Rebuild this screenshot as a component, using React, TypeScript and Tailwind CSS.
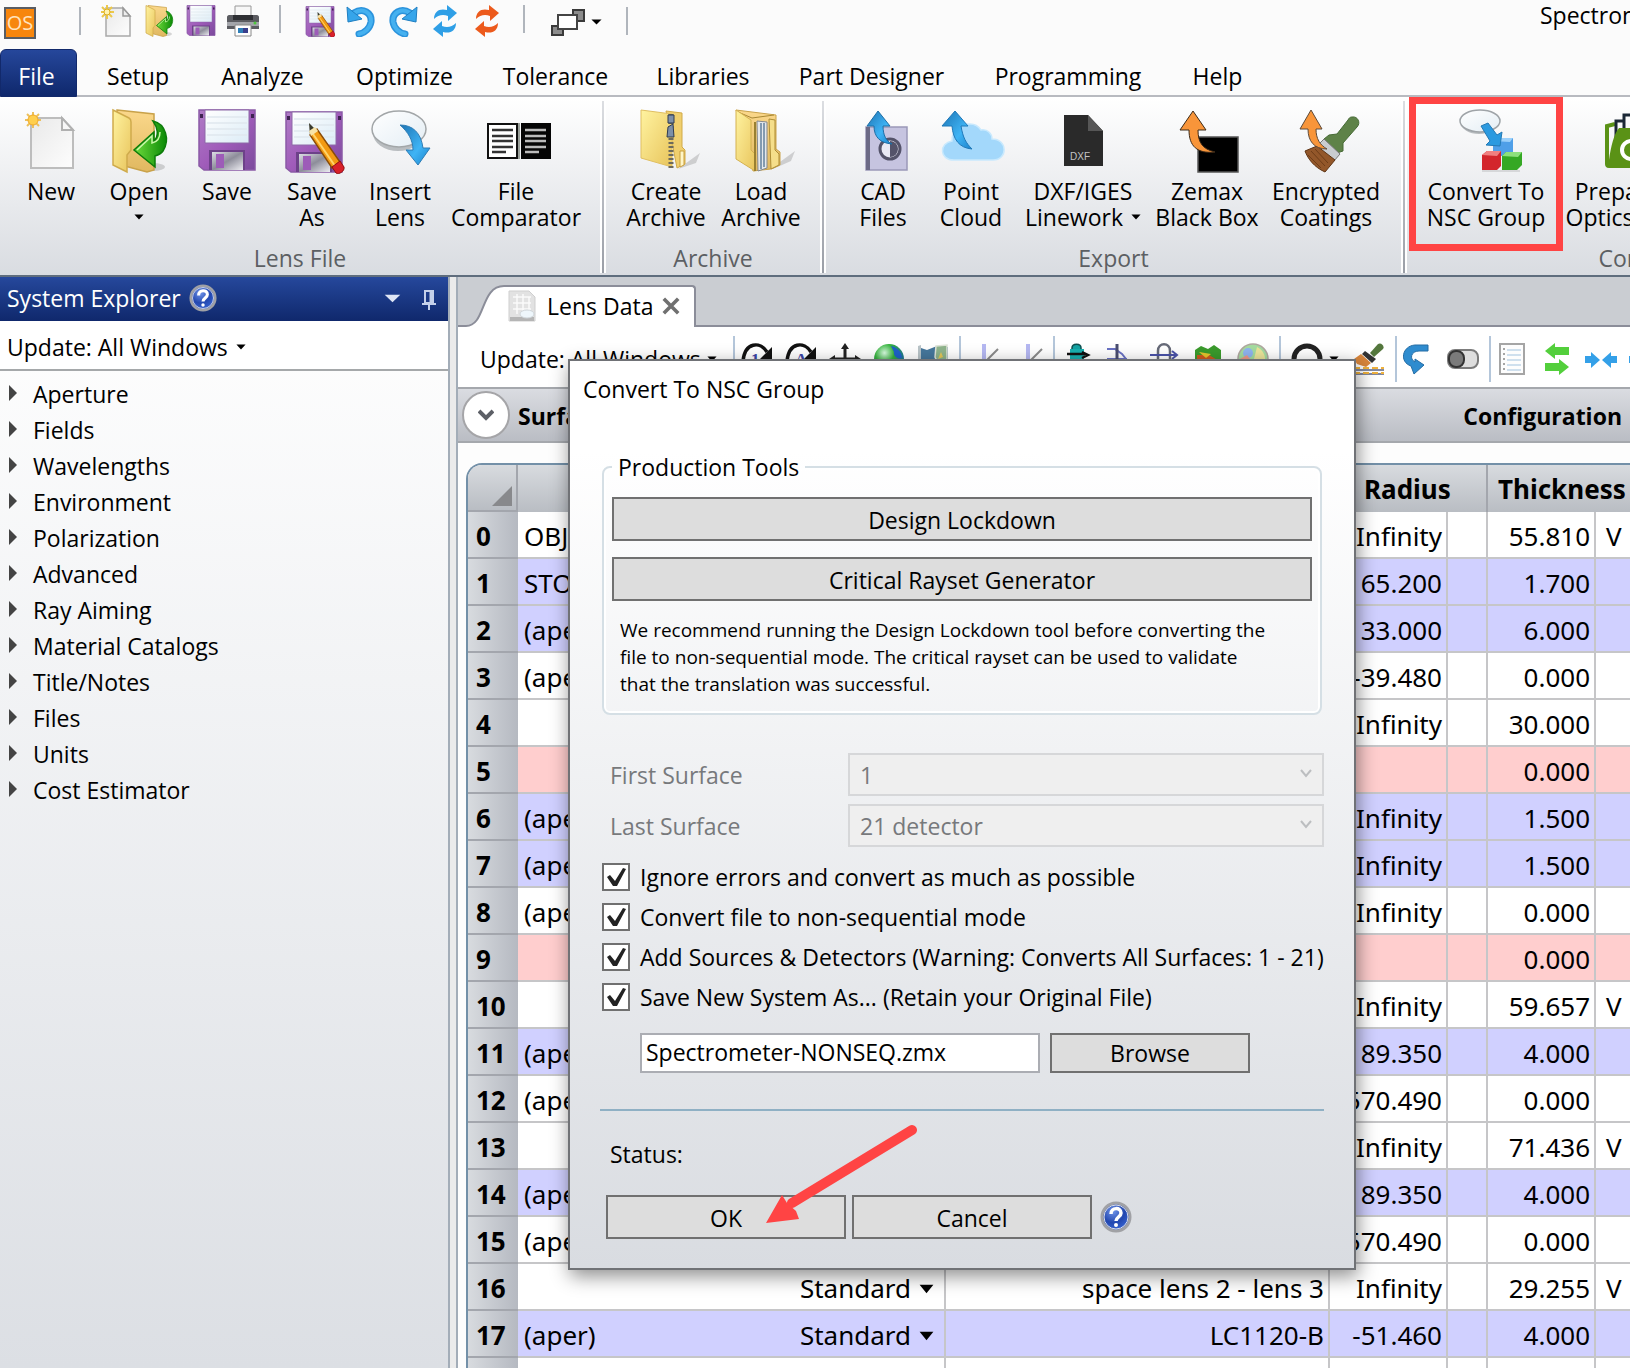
import React from "react";
import clsx from "clsx";

/* ---------- small icons ---------- */

type IconProps = { className?: string };

function Caret({ className = "w-[11px] h-1.5" }: IconProps) {
  return (
    <svg viewBox="0 0 12 7" preserveAspectRatio="none" className={clsx("shrink-0", className)} fill="currentColor">
      <path d="M0.5 0.5h11L6 6.5z" />
    </svg>
  );
}

// Gradients shared by every icon on the page
function IconDefs() {
  return (
    <svg className="absolute w-0 h-0" aria-hidden="true">
      <defs>
        <linearGradient id="page" x1="0" y1="0" x2="1" y2="1">
          <stop offset="0" stopColor="#e9e9e9" />
          <stop offset="1" stopColor="#fdfdfd" />
        </linearGradient>
        <linearGradient id="folder" x1="0" y1="0" x2="1" y2="1">
          <stop offset="0" stopColor="#fff3a0" />
          <stop offset="1" stopColor="#e8c45c" />
        </linearGradient>
        <linearGradient id="folderBack" x1="0" y1="0" x2="0" y2="1">
          <stop offset="0" stopColor="#fbd88b" />
          <stop offset="1" stopColor="#e0b860" />
        </linearGradient>
        <linearGradient id="green" x1="0" y1="0" x2="1" y2="0">
          <stop offset="0" stopColor="#6fdc3c" />
          <stop offset="1" stopColor="#0b8a06" />
        </linearGradient>
        <linearGradient id="purple" x1="0" y1="0" x2="1" y2="1">
          <stop offset="0" stopColor="#b07cc6" />
          <stop offset="0.5" stopColor="#a05cba" />
          <stop offset="1" stopColor="#7b4a9c" />
        </linearGradient>
        <linearGradient id="label" x1="0" y1="0" x2="1" y2="1">
          <stop offset="0" stopColor="#ffffff" />
          <stop offset="1" stopColor="#dcecf6" />
        </linearGradient>
        <linearGradient id="shutter" x1="0" y1="0" x2="1" y2="1">
          <stop offset="0" stopColor="#dcdce4" />
          <stop offset="0.5" stopColor="#8d8d9a" />
          <stop offset="1" stopColor="#ededf2" />
        </linearGradient>
        <linearGradient id="blue" x1="0" y1="0" x2="1" y2="1">
          <stop offset="0" stopColor="#1d74b4" />
          <stop offset="0.6" stopColor="#3fb4f5" />
          <stop offset="1" stopColor="#1b83cc" />
        </linearGradient>
        <linearGradient id="glass" x1="0" y1="0" x2="1" y2="1">
          <stop offset="0" stopColor="#ffffff" />
          <stop offset="1" stopColor="#e3edf4" />
        </linearGradient>
        <radialGradient id="help" cx="0.4" cy="0.3" r="0.8">
          <stop offset="0" stopColor="#6f93e8" />
          <stop offset="0.5" stopColor="#2348b0" />
          <stop offset="1" stopColor="#3f6fe0" />
        </radialGradient>
        <radialGradient id="globe" cx="0.35" cy="0.3" r="0.8">
          <stop offset="0" stopColor="#d8fbe0" />
          <stop offset="0.4" stopColor="#35b33c" />
          <stop offset="1" stopColor="#1258b8" />
        </radialGradient>
      </defs>
    </svg>
  );
}

function NewIcon({ className }: IconProps) {
  return (
    <svg viewBox="1 0 64 64" className={className}>
      <path d="M13 9h31l11 12v38H13z" fill="url(#page)" stroke="#bdbdbd" strokeWidth="2" />
      <path d="M44 9v12h11z" fill="#f7f7f7" stroke="#b0b0b0" strokeWidth="2" />
      <g stroke="#ecc05c" strokeWidth="2">
        <path d="M15 3v16M7 11h16M9 5l12 12M21 5L9 17" />
      </g>
      <circle cx="15" cy="11" r="5" fill="#ffcf4d" stroke="#f0a92a" />
    </svg>
  );
}

function NewSmallIcon({ className }: IconProps) {
  return (
    <svg viewBox="0 0 32 32" className={className}>
      <path d="M5 3h17l7 8v20H5z" fill="url(#page)" stroke="#a9a9a9" strokeWidth="1.5" />
      <path d="M22 3v8h7z" fill="#eee" stroke="#999" strokeWidth="1.5" />
      <path d="M6 0v14M0 7h13M1 2l10 10M11 2L1 12" stroke="#ecc84a" strokeWidth="2" />
      <circle cx="6" cy="7" r="3" fill="#fff3b0" stroke="#dcae22" />
    </svg>
  );
}

function OpenIcon({ className }: IconProps) {
  return (
    <svg viewBox="0 0 64 64" className={className}>
      <ellipse cx="46" cy="58" rx="12" ry="4" fill="#000" opacity="0.15" />
      <path d="M10 1l37 4v56l-7 2-30-8z" fill="url(#folderBack)" stroke="#c9a24a" strokeWidth="1.5" />
      <path d="M6 1l16 8c2 1 2 2 2 4v28l-4 5v17L6 56z" fill="url(#folder)" stroke="#cfab4c" strokeWidth="1.5" />
      <path
        d="M46 12c13 3 17 19 10 30-2 3-5 4-8 5v11L27 41l20-18v9c5-5 4-13-1-20z"
        fill="url(#green)"
        stroke="#0d7c0a"
        strokeWidth="1.5"
      />
      <path d="M30 41l15-14v7c5-1 8-5 8-11" fill="none" stroke="#c8f7a8" strokeWidth="1.5" />
    </svg>
  );
}

function FloppyBody() {
  return (
    <>
      <path d="M4 1h56v60H9l-5-4z" fill="url(#purple)" stroke="#8a5aa6" strokeWidth="1.5" />
      <path d="M10 1h44v33H10z" fill="url(#label)" stroke="#8e6aa8" strokeWidth="1" />
      <path d="M12 8h40M12 14h40M12 20h40M12 26h40" stroke="#dfe8ee" strokeWidth="1.5" />
      <path d="M5 5h3v4H5zM56 5h3v4h-3z" fill="#3f2352" />
      <path d="M14 41h36v20H14z" fill="#6d4189" />
      <path d="M17 43h31v18H17z" fill="url(#shutter)" />
      <path d="M21 45h8v14h-8z" fill="#9d5cb8" />
    </>
  );
}

function SaveIcon({ className }: IconProps) {
  return (
    <svg viewBox="0 0 64 64" className={className}>
      <FloppyBody />
    </svg>
  );
}

function SaveAsIcon({ className }: IconProps) {
  return (
    <svg viewBox="-2 -2 64 64" className={className}>
      <FloppyBody />
      <path d="M27 12l1 13 7-5z" fill="#3a3a2c" />
      <path d="M28 24l7-6 23 33-8 6z" fill="#f39a12" stroke="#8a4c08" strokeWidth="1.5" />
      <path d="M31 23l22 32" stroke="#ffd46a" strokeWidth="2" />
      <path d="M27 20l6-4 3 4-7 5z" fill="#f7e3a8" />
      <path d="M50 56l8-6 4 6c1 4-5 8-8 6z" fill="#d9202a" stroke="#8f1010" />
    </svg>
  );
}

function InsertLensIcon({ className }: IconProps) {
  return (
    <svg viewBox="-3 0 64 64" className={className}>
      <ellipse cx="27" cy="24" rx="25" ry="18" fill="#b9bdc0" />
      <ellipse cx="28" cy="20" rx="27" ry="18" fill="url(#glass)" stroke="#a2a6a8" strokeWidth="1.5" />
      <path d="M29 16c13 0 21 8 23 23h7L47 56 35 41h7c0-10-5-18-13-25z" fill="url(#blue)" stroke="#2f7db5" strokeWidth="1" />
    </svg>
  );
}

function ComparatorIcon({ className }: IconProps) {
  return (
    <svg viewBox="-3 0 64 64" className={className}>
      <path d="M1 15h29v34H1z" fill="#fff" stroke="#111" strokeWidth="2" />
      <path d="M34 14h30v36H34z" fill="#050505" />
      <path d="M31 14h2v36h-2z" fill="#9aa09a" />
      <path d="M5 21h21M5 27h21M5 32h21M5 38h21M5 43h14" stroke="#333" strokeWidth="2.5" />
      <path d="M38 21h21M38 27h21M38 32h21M38 38h21M38 43h14" stroke="#bbb" strokeWidth="2.5" />
    </svg>
  );
}

function CreateArchiveIcon({ className }: IconProps) {
  return (
    <svg viewBox="-2 0 64 64" className={className}>
      <path d="M42 60l22-16-4 10-18 6z" fill="#000" opacity="0.15" />
      <path d="M30 2l16 2v34l3 3v14l-8 4z" fill="#f0cf6e" stroke="#d1aa48" strokeWidth="1" />
      <path d="M5 1l31 4v53L5 49z" fill="url(#folder)" stroke="#e0bf62" strokeWidth="1" />
      <path d="M35 5v54" stroke="#6d6a5c" strokeWidth="5" strokeDasharray="2 2" />
      <path d="M32 6h6v8h-6zM32 18l5-3 1 13h-7z" fill="#7d8fa8" stroke="#2f3b50" strokeWidth="1" />
      <path d="M44 42h4v14l-4 2z" fill="#fff6c8" stroke="#c99f3e" strokeWidth="1" />
    </svg>
  );
}

function LoadArchiveIcon({ className }: IconProps) {
  return (
    <svg viewBox="-2 0 64 64" className={className}>
      <path d="M42 58l22-16-4 10-18 8z" fill="#000" opacity="0.15" />
      <path d="M5 1l40 5v34l4 3v13l-9 4-18 2z" fill="url(#folderBack)" stroke="#c9a24a" strokeWidth="1" />
      <path d="M7 3l14 6 22-3" fill="none" stroke="#a88834" strokeWidth="1" />
      <path d="M26 12l10 1v46l-9 3z" fill="#e4e8ec" stroke="#85888c" strokeWidth="1" />
      <path d="M30 14v46M33 14v44" stroke="#63809c" strokeWidth="1.5" />
      <path d="M5 1l15 10v30l4 4v17L5 50z" fill="url(#folder)" stroke="#d4b150" strokeWidth="1" />
      <path d="M24 13v49" stroke="#9a8030" strokeWidth="2" />
      <path d="M38 10l6 1v30l4 4v11l-8 4z" fill="#f5de8a" stroke="#ae8d35" strokeWidth="1" />
    </svg>
  );
}

function CadIcon({ className }: IconProps) {
  return (
    <svg viewBox="-2 0 64 64" className={className}>
      <path d="M13 18h41v43H13z" fill="#c6c4e0" stroke="#9a98b8" strokeWidth="1.5" />
      <path d="M13 18h4v43h-4z" fill="#6c6a86" />
      <circle cx="37" cy="40" r="10" fill="#e9e9f4" stroke="#54536a" strokeWidth="3" />
      <path d="M37 32a8 8 0 010 16z" fill="#54536a" />
      <path d="M25 2l12 15h-7c0 9 3 15 9 18-12-1-18-7-18-18h-7z" fill="url(#blue)" stroke="#1e6ea6" strokeWidth="1" />
    </svg>
  );
}

function CloudIcon({ className }: IconProps) {
  return (
    <svg viewBox="-2 0 64 64" className={className}>
      <path
        d="M13 51C-2 51-2 34 11 32c0-12 8-17 18-17 6 0 9 3 11 6 7-1 11 4 11 9 16 0 16 21 1 21z"
        fill="#a3d8fb"
        stroke="#c9e9fd"
        strokeWidth="1.5"
      />
      <path d="M14 2l13 15h-7c2 12 5 17 11 23-13-1-19-10-20-23H1z" fill="url(#blue)" stroke="#1f78b8" strokeWidth="1" />
    </svg>
  );
}

function DxfIcon({ className }: IconProps) {
  return (
    <svg viewBox="0 0 64 64" className={className}>
      <path d="M13 6h24l15 16v35H13z" fill="#2a2a2a" />
      <path d="M37 6v16h15z" fill="#565656" />
      <text x="19" y="51" fontSize="10" fill="#c4c4c4" fontFamily="Liberation Sans, sans-serif">
        DXF
      </text>
    </svg>
  );
}

function BlackBoxIcon({ className }: IconProps) {
  return (
    <svg viewBox="-3 0 64 64" className={className}>
      <path d="M20 28h40v35H20z" fill="#000" stroke="#555" strokeWidth="1.5" />
      <path d="M15 2l13 19h-8c0 12 4 19 17 22-18 2-26-6-26-22H2z" fill="#f8953a" stroke="#3d2a18" strokeWidth="1" />
    </svg>
  );
}

function CoatingsIcon({ className }: IconProps) {
  return (
    <svg viewBox="-5 0 64 64" className={className}>
      <path d="M53 8c6-1 9 6 5 10L44 34v8l-6 2-13-14 5-4 8-1 11-14c1-2 2-3 4-3z" fill="#5e8248" stroke="#466a35" strokeWidth="1" />
      <path d="M25 30l16 15-6 7-18-14z" fill="#c9ccd0" stroke="#777" strokeWidth="1" />
      <path d="M18 37l18 14-10 12C15 58 9 50 6 42z" fill="#93572a" stroke="#5e3414" strokeWidth="1" />
      <path d="M12 42l14 15M16 40l13 14M9 46l13 13" stroke="#6e3d18" strokeWidth="1" />
      <path d="M12 1l11 19h-6c0 10 4 16 11 20-13 0-19-8-19-20H1z" fill="#f8953a" stroke="#5d4a3a" strokeWidth="1" />
    </svg>
  );
}

function ConvertNscIcon({ className }: IconProps) {
  return (
    <svg viewBox="-5 0 64 64" className={className}>
      <ellipse cx="20" cy="14" rx="18" ry="11" fill="#b9bdc0" />
      <ellipse cx="21" cy="12" rx="20" ry="11" fill="url(#glass)" stroke="#9fa4a8" strokeWidth="1.5" />
      <path d="M34 32l4-3h16v14l-4 4H34z" fill="#4f9fe8" />
      <path d="M34 32l4-3h16l-3 4z" fill="#9bd0fa" />
      <path d="M23 46l5-4h14v15l-4 4H23z" fill="#d3262c" />
      <path d="M23 46l5-4h14l-4 5z" fill="#f08080" />
      <path d="M43 47l4-4h16v13l-5 5H43z" fill="#35a824" />
      <path d="M43 47l4-4h16l-4 5z" fill="#8ee07c" />
      <path d="M23 61h38v2H23z" fill="#000" opacity="0.1" />
      <path d="M22 17l7-3 9 12 5-3-2 14-14-1 4-4z" fill="#2b9ae0" stroke="#2479b4" strokeWidth="1" />
    </svg>
  );
}

function PrepareIcon({ className }: IconProps) {
  return (
    <svg viewBox="4 1 64 64" className={className}>
      <path d="M5 56V18l8-2" fill="none" stroke="#5a9216" strokeWidth="4" />
      <path d="M14 34V13h9M22 26V7h20" fill="none" stroke="#1a2735" strokeWidth="3" />
      <path d="M7 52c2-14 5-26 10-32h53v40H7c-3 0-4-2-4-4z" fill="#5a9216" />
      <circle cx="29" cy="42" r="9" fill="none" stroke="#fff" strokeWidth="4" />
    </svg>
  );
}

function PrintIcon({ className }: IconProps) {
  return (
    <svg viewBox="0 0 32 32" className={className}>
      <path d="M8 1h16v12H8z" fill="#f7f7f7" stroke="#999" />
      <path d="M0 12c0-1 1-2 2-2h28c1 0 2 1 2 2v12H0z" fill="#5b5c61" />
      <path d="M6 10h20v5H6z" fill="#2e2f33" />
      <path d="M0 17h32v4H0z" fill="#a3a5aa" />
      <path d="M8 20h16v11H8z" fill="#fff" stroke="#888" />
      <path d="M11 23h5v5h-5z" fill="#2f7fb8" />
      <path d="M16 23h5v5h-5z" fill="#3a3f8c" />
      <circle cx="28" cy="18" r="1.5" fill="#4cc83a" />
    </svg>
  );
}

function UndoIcon({ className }: IconProps) {
  return (
    <svg viewBox="0 0 32 32" className={className}>
      <path d="M9 8c9-6 18 0 17 9-1 6-6 11-12 12" fill="none" stroke="#2b93dc" strokeWidth="7" strokeLinecap="round" />
      <path d="M9 8c9-6 18 0 17 9-1 6-6 11-12 12" fill="none" stroke="#45b1f0" strokeWidth="4" strokeLinecap="round" />
      <path d="M2 2l1 15 14-3z" fill="#36a5ea" stroke="#1f7fc2" strokeWidth="1" />
    </svg>
  );
}

function RefreshIcon({ className }: IconProps) {
  return (
    <svg viewBox="0 0 28 32" className={className} fill="currentColor">
      <path d="M3 14C3 6 9 3 16 5V0l10 8-9 8v-5c-5-2-10-1-14 3z" />
      <path d="M25 18c0 8-6 11-13 9v5L2 24l9-8v5c5 2 10 1 14-3z" />
    </svg>
  );
}

function WindowsIcon({ className }: IconProps) {
  return (
    <svg viewBox="0 0 34 28" className={className}>
      <path d="M22 2h11v11H22z" fill="#8c8c8c" stroke="#3a3a3a" strokeWidth="2" />
      <path d="M1 18h11v9H1z" fill="#8c8c8c" stroke="#3a3a3a" strokeWidth="2" />
      <path d="M7 7h19v14H7z" fill="#fff" stroke="#444" strokeWidth="2" />
    </svg>
  );
}

function HelpIcon({ className }: IconProps) {
  return (
    <svg viewBox="0 0 32 32" className={className}>
      <circle cx="16" cy="16" r="14" fill="url(#help)" stroke="#a0a1a5" strokeWidth="3" />
      <circle cx="16" cy="16" r="12" fill="none" stroke="#d9dce6" strokeWidth="1" />
      <path d="M11 13c0-7 10-7 10-1 0 4-5 4-5 8" fill="none" stroke="#fff" strokeWidth="3.5" />
      <circle cx="16" cy="24" r="2" fill="#fff" />
    </svg>
  );
}

/* ---------- editor toolbar icons ---------- */

function OrbitIcon({ mark }: { mark: string }) {
  return (
    <svg viewBox="0 0 32 32" className="w-8 h-8">
      <path d="M2 18C4-1 19-2 26 9" fill="none" stroke="#111" strokeWidth="3.5" />
      <path d="M31 4v12H19z" fill="#111" />
      <text x="10" y="22" fontSize="17" fontWeight="700" fill="#3c46a8" fontFamily="Liberation Serif, serif">
        {mark}
      </text>
    </svg>
  );
}

function MoveIcon() {
  return (
    <svg viewBox="0 0 32 32" className="w-8 h-8">
      <path d="M16 3v26M3 16h26" stroke="#222" strokeWidth="3" />
      <path d="M16 0l4 6h-8zM16 32l4-6h-8zM0 16l6-4v8zM32 16l-6-4v8z" fill="#222" />
    </svg>
  );
}

function GlobeIcon() {
  return (
    <svg viewBox="0 0 32 32" className="w-8 h-8">
      <circle cx="16" cy="16" r="15" fill="url(#globe)" />
      <path d="M18 3c6 1 11 6 11 12-5 2-9-3-8-6z" fill="#1e62c8" />
    </svg>
  );
}

function MapIcon() {
  return (
    <svg viewBox="0 0 32 32" className="w-8 h-8">
      <path d="M1 4l9 3 10-4 11 1v26H1z" fill="#46779c" />
      <path d="M1 3l3-1v28H1z" fill="#b9c4c8" />
      <path d="M19 3l11-1v14l-8 6-4-8z" fill="#8fb48c" stroke="#dfe4d8" strokeWidth="1.5" />
      <path d="M24 9l-3 7 5-2z" fill="#e4c858" />
    </svg>
  );
}

function AxisIcon() {
  return (
    <svg viewBox="0 0 32 32" className="w-8 h-8">
      <path d="M17 1v30M1 18h16" stroke="#b5b8f2" strokeWidth="4" />
      <path d="M20 17L31 6" stroke="#8a8a8a" strokeWidth="2" />
    </svg>
  );
}

function ElementIcon() {
  return (
    <svg viewBox="0 0 32 32" className="w-8 h-8">
      <path d="M11 5c0-5 9-5 9 0v22h-9z" fill="#13a3a3" stroke="#0d5050" strokeWidth="1.5" />
      <path d="M9 6h14v11H9z" fill="#19b0b0" />
      <path d="M6 11h18M21 9l6 3-6 3" stroke="#111" strokeWidth="2.5" fill="none" />
    </svg>
  );
}

function TiltIcon() {
  return (
    <svg viewBox="0 0 32 32" className="w-8 h-8" fill="none">
      <path d="M2 6h8l7 5 8 10M2 16h20" stroke="#6a72c4" strokeWidth="2" />
      <path d="M12 1v24" stroke="#4a4d70" strokeWidth="3" />
    </svg>
  );
}

function ApertureIcon() {
  return (
    <svg viewBox="0 0 32 32" className="w-8 h-8" fill="none">
      <path d="M9 31V8c0-9 12-9 12 0v23" stroke="#666a78" strokeWidth="2.5" />
      <path d="M1 12h26M23 8l5 4-5 4" stroke="#4a52a8" strokeWidth="2" />
    </svg>
  );
}

function SurfaceIcon() {
  return (
    <svg viewBox="0 0 32 32" className="w-8 h-8">
      <path d="M2 7l6-4 7 3 6-4 7 5v18H2z" fill="#3a9b2c" />
      <path d="M4 12h12l10 6v7H4z" fill="#d05a1e" />
      <path d="M6 9l12 2-5 4z" fill="#e8c52c" />
    </svg>
  );
}

function FalseColorIcon() {
  return (
    <svg viewBox="0 0 32 32" className="w-8 h-8">
      <circle cx="16" cy="16" r="15" fill="#a5dca0" stroke="#b0a8a0" strokeWidth="1.5" />
      <circle cx="11" cy="10" r="5" fill="#8fb4f0" />
      <path d="M20 4c6 3 8 8 8 12H17z" fill="#ece59a" />
      <path d="M3 16h10l-3-4z" fill="#ee9a8a" />
    </svg>
  );
}

function RingIcon() {
  return (
    <svg viewBox="0 0 32 32" className="w-8 h-8">
      <circle cx="16" cy="16" r="13" fill="none" stroke="#222" strokeWidth="5" />
    </svg>
  );
}

function BrushIcon() {
  return (
    <svg viewBox="0 0 32 32" className="w-8 h-8">
      <path d="M25 1c3-2 7 2 5 5l-9 8-4-4z" fill="#54773d" />
      <path d="M12 8l11 8-4 4-10-9z" fill="#333" />
      <path d="M8 11l10 9-5 4-9-3-3-5z" fill="#d9863c" />
      <path d="M1 27h30M1 31h30" stroke="#5a6280" strokeWidth="1.5" />
      <path d="M1 25h30M1 30h30" stroke="#efb13c" strokeWidth="2" strokeDasharray="6 3" />
    </svg>
  );
}

function ReverseIcon() {
  return (
    <svg viewBox="2 0 32 32" className="w-8 h-8">
      <path d="M27 2v6h-9c-8 0-10 8-4 11v-3l9 6-10 9-3-8C-2 19 1 3 14 2z" fill="#2f8ccf" stroke="#246ca4" strokeWidth="1" />
    </svg>
  );
}

function ToggleIcon() {
  return (
    <svg viewBox="0 0 32 32" className="w-8 h-8">
      <rect x="1" y="7" width="30" height="18" rx="7" fill="#dedede" stroke="#7c7c7c" strokeWidth="2" />
      <rect x="2" y="8" width="15" height="16" rx="7" fill="#7a7a7a" stroke="#333" strokeWidth="2" />
    </svg>
  );
}

function ListIcon() {
  return (
    <svg viewBox="0 0 32 32" className="w-8 h-8">
      <path d="M3 1h24v30H3z" fill="#fdfdfd" stroke="#a5a5a5" strokeWidth="2" />
      <path d="M10 7h14M10 12h14M10 17h14M10 22h14M10 27h14" stroke="#cfe0ee" strokeWidth="2" />
      <path d="M7 5v24" stroke="#888" strokeWidth="1.5" strokeDasharray="2 3" />
    </svg>
  );
}

function SwapIcon() {
  return (
    <svg viewBox="0 0 32 32" className="w-8 h-8" fill="#53cf3c">
      <path d="M4 8l10-8v4h14v8H14v4z" />
      <path d="M28 24l-10-8v4H4v8h14v4z" />
    </svg>
  );
}

function CollapseIcon() {
  return (
    <svg viewBox="0 0 32 32" className="w-8 h-8" fill="#34a0e8">
      <path d="M0 13h6V9l9 8-9 8v-5H0zM32 13h-6V9l-9 8 9 8v-5h6z" />
    </svg>
  );
}

function Divider({ className }: IconProps) {
  return <span className={clsx("w-0.5 h-[46px] bg-[#b4c6da] shrink-0", className)} />;
}

/* ---------- data ---------- */

const menuTabs = [
  { label: "Setup", width: "w-[114px]" },
  { label: "Analyze", width: "w-[135px]" },
  { label: "Optimize", width: "w-[149px]" },
  { label: "Tolerance", width: "w-[153px]" },
  { label: "Libraries", width: "w-[142px]" },
  { label: "Part Designer", width: "w-[195px]" },
  { label: "Programming", width: "w-[198px]" },
  { label: "Help", width: "w-[101px]" },
];

interface RibbonItem {
  lines: string[];
  icon: React.ReactNode;
  width: string;
  caret?: boolean;
  highlight?: boolean;
}

interface RibbonGroup {
  title: string;
  width: string;
  inset: string;
  items: RibbonItem[];
}

const ribbonIcon = "w-16 h-16 overflow-visible";

const ribbonGroups: RibbonGroup[] = [
  {
    title: "Lens File",
    width: "w-[600px]",
    inset: "pl-[7px]",
    items: [
      { lines: ["New"], icon: <NewIcon className={ribbonIcon} />, width: "w-[88px]" },
      { lines: ["Open", ""], icon: <OpenIcon className={ribbonIcon} />, width: "w-[88px]", caret: true },
      { lines: ["Save"], icon: <SaveIcon className={ribbonIcon} />, width: "w-[88px]" },
      { lines: ["Save", "As"], icon: <SaveAsIcon className={ribbonIcon} />, width: "w-[82px]" },
      { lines: ["Insert", "Lens"], icon: <InsertLensIcon className={ribbonIcon} />, width: "w-[94px]" },
      { lines: ["File", "Comparator"], icon: <ComparatorIcon className={ribbonIcon} />, width: "w-[138px]" },
    ],
  },
  {
    title: "Archive",
    width: "w-[214px]",
    inset: "pl-3",
    items: [
      { lines: ["Create", "Archive"], icon: <CreateArchiveIcon className={ribbonIcon} />, width: "w-24" },
      { lines: ["Load", "Archive"], icon: <LoadArchiveIcon className={ribbonIcon} />, width: "w-[94px]" },
    ],
  },
  {
    title: "Export",
    width: "w-[575px]",
    inset: "pl-[13px]",
    items: [
      { lines: ["CAD", "Files"], icon: <CadIcon className={ribbonIcon} />, width: "w-[88px]" },
      { lines: ["Point", "Cloud"], icon: <CloudIcon className={ribbonIcon} />, width: "w-[88px]" },
      { lines: ["DXF/IGES", "Linework"], icon: <DxfIcon className={ribbonIcon} />, width: "w-[136px]", caret: true },
      { lines: ["Zemax", "Black Box"], icon: <BlackBoxIcon className={ribbonIcon} />, width: "w-[112px]" },
      { lines: ["Encrypted", "Coatings"], icon: <CoatingsIcon className={ribbonIcon} />, width: "w-[126px]" },
    ],
  },
  {
    title: "Conversion",
    width: "w-[504px]",
    inset: "pl-0.5",
    items: [
      { lines: ["Convert To", "NSC Group"], icon: <ConvertNscIcon className={ribbonIcon} />, width: "w-[154px]", highlight: true },
      { lines: ["Prepare For", "OpticsBuilder"], icon: <PrepareIcon className={ribbonIcon} />, width: "w-[150px]" },
    ],
  },
];

const explorerItems = [
  "Aperture",
  "Fields",
  "Wavelengths",
  "Environment",
  "Polarization",
  "Advanced",
  "Ray Aiming",
  "Material Catalogs",
  "Title/Notes",
  "Files",
  "Units",
  "Cost Estimator",
];

interface LensRow {
  surf?: string;
  type?: string;
  comment?: string;
  radius?: string;
  thickness?: string;
  solve?: string;
  tone?: "blue" | "red";
}

const lensRows: LensRow[] = [
  { surf: "OBJECT", radius: "Infinity", thickness: "55.810", solve: "V" },
  { surf: "STOP", radius: "165.200", thickness: "1.700", tone: "blue" },
  { surf: "(aper)", radius: "33.000", thickness: "6.000", tone: "blue" },
  { surf: "(aper)", radius: "-39.480", thickness: "0.000" },
  { radius: "Infinity", thickness: "30.000" },
  { thickness: "0.000", tone: "red" },
  { surf: "(aper)", radius: "Infinity", thickness: "1.500", tone: "blue" },
  { surf: "(aper)", radius: "Infinity", thickness: "1.500", tone: "blue" },
  { surf: "(aper)", radius: "Infinity", thickness: "0.000" },
  { thickness: "0.000", tone: "red" },
  { radius: "Infinity", thickness: "59.657", solve: "V" },
  { surf: "(aper)", radius: "89.350", thickness: "4.000", tone: "blue" },
  { surf: "(aper)", radius: "570.490", thickness: "0.000" },
  { radius: "Infinity", thickness: "71.436", solve: "V" },
  { surf: "(aper)", radius: "89.350", thickness: "4.000", tone: "blue" },
  { surf: "(aper)", radius: "570.490", thickness: "0.000" },
  { type: "Standard", comment: "space lens 2 - lens 3", radius: "Infinity", thickness: "29.255", solve: "V" },
  { surf: "(aper)", type: "Standard", comment: "LC1120-B", radius: "-51.460", thickness: "4.000", tone: "blue" },
];

const options = [
  "Ignore errors and convert as much as possible",
  "Convert file to non-sequential mode",
  "Add Sources & Detectors (Warning: Converts All Surfaces: 1 - 21)",
  "Save New System As... (Retain your Original File)",
];

/* ---------- window chrome ---------- */

function QuickAccess() {
  const btn = "w-8 h-8 shrink-0";
  const sep = "w-0.5 h-7 bg-[#b0b5bc] shrink-0";
  return (
    <div className="h-[49px] flex items-start pt-[5px] pl-1 overflow-hidden">
      <div className="w-8 h-8 mt-0.5 border-2 border-[#595d63] bg-[#f7860d] text-[#ffe3bd] text-[20px] leading-7 text-center shrink-0">
        OS
      </div>
      <span className={clsx(sep, "ml-[43px] mt-0.5")} />
      <button aria-label="New" className={clsx(btn, "ml-5")}><NewSmallIcon className="w-8 h-8" /></button>
      <button aria-label="Open" className={clsx(btn, "ml-2.5")}><OpenIcon className="w-8 h-8" /></button>
      <button aria-label="Save" className={clsx(btn, "ml-2.5")}><SaveIcon className="w-8 h-8" /></button>
      <button aria-label="Print" className={clsx(btn, "ml-2.5")}><PrintIcon className="w-8 h-8" /></button>
      <span className={clsx(sep, "ml-5")} />
      <button aria-label="Save As" className={clsx(btn, "ml-[22px]")}><SaveAsIcon className="w-8 h-8" /></button>
      <button aria-label="Undo" className={clsx(btn, "ml-2.5")}><UndoIcon className="w-8 h-8" /></button>
      <button aria-label="Redo" className={clsx(btn, "ml-2.5")}><UndoIcon className="w-8 h-8 -scale-x-100" /></button>
      <button aria-label="Update" className={clsx(btn, "ml-2.5 text-[#2f9fe6]")}><RefreshIcon className="w-7 h-8 mx-auto" /></button>
      <button aria-label="Update All" className={clsx(btn, "ml-2.5 text-[#ec5a1c]")}><RefreshIcon className="w-7 h-8 mx-auto" /></button>
      <span className={clsx(sep, "ml-5")} />
      <button aria-label="Windows" className="ml-[26px] mt-[3px] flex items-center gap-1.5 shrink-0">
        <WindowsIcon className="w-[34px] h-7" />
        <Caret />
      </button>
      <span className={clsx(sep, "ml-6 mt-0.5")} />
      <p className="ml-auto w-[90px] -mt-1.5 leading-8 whitespace-nowrap shrink-0">Spectrometer</p>
    </div>
  );
}

function MenuTabs() {
  return (
    <nav className="h-12 flex items-stretch border-b-2 border-[#b8bac0]">
      <button className="w-[77px] -mb-0.5 pt-1.5 pr-1 rounded-t-md text-white bg-linear-to-b from-[#26479b] to-[#0f286c] border border-[#12296b]">
        File
      </button>
      <div className="flex pl-1">
        {menuTabs.map((tab) => (
          <button key={tab.label} className={clsx("pt-2", tab.width)}>
            {tab.label}
          </button>
        ))}
      </div>
    </nav>
  );
}

function RibbonButton({ item }: { item: RibbonItem }) {
  return (
    <button className={clsx("relative h-[154px] pt-3 flex flex-col items-center justify-start shrink-0", item.width)}>
      {item.icon}
      <span className="mt-[5px] block">
        {item.lines.map((line, i) => {
          const withCaret = item.caret && i === item.lines.length - 1;
          return (
            <span key={i} className="flex items-center justify-center gap-2 h-[26px] leading-[26px] whitespace-nowrap">
              {line}
              {withCaret && <Caret className="w-2.5 h-1.5" />}
            </span>
          );
        })}
      </span>
      {item.highlight && <span className="absolute inset-0 border-[7px] border-[#ff4444]" />}
    </button>
  );
}

function Ribbon() {
  return (
    <div className="h-[180px] flex bg-linear-to-b from-white to-[#d9dce1] border-b-2 border-[#5f6d7d] overflow-hidden">
      {ribbonGroups.map((group, i) => (
        <React.Fragment key={group.title}>
          {i > 0 && (
            <span className="w-1.5 mt-1 mb-0.5 border-x-2 border-white bg-linear-to-b from-[#dcdee2] to-[#9a9ea6] bg-clip-padding shrink-0" />
          )}
          <section className={clsx("shrink-0", group.width)}>
            <div className={clsx("flex", group.inset)}>
              {group.items.map((item) => (
                <RibbonButton key={item.lines.join(" ")} item={item} />
              ))}
            </div>
            <h2 className="-mt-[7px] leading-7 text-center text-[#5c5f63]">{group.title}</h2>
          </section>
        </React.Fragment>
      ))}
    </div>
  );
}

function SystemExplorer() {
  return (
    <aside className="w-[450px] shrink-0 flex flex-col border-r-2 border-[#a3adb8] bg-linear-to-b from-white to-[#dcdfe4]">
      <div className="h-11 pl-[7px] pr-3 pb-0.5 flex items-center text-white bg-linear-to-b from-[#26489c] to-[#0f286c]">
        <h1>System Explorer</h1>
        <HelpIcon className="w-7 h-7 ml-2" />
        <Caret className="ml-auto w-[17px] h-[9px] text-[#dfe6f5]" />
        <svg viewBox="0 0 14 20" className="w-3.5 h-5 ml-[21px] mt-1" fill="none" stroke="#c4d0ea" strokeWidth="2">
          <path d="M3 1h8v12H3zM0 14h14M7 14v6" />
          <path d="M9 2v11" strokeWidth="3" />
        </svg>
      </div>
      <button className="h-[50px] pl-[7px] pt-1 flex items-center gap-2 bg-white border-b-2 border-[#a5a8aa]">
        Update: All Windows <Caret className="w-2.5 h-1.5" />
      </button>
      <ul className="pt-[5px]">
        {explorerItems.map((item) => (
          <li key={item}>
            <button className="h-9 w-full pl-[9px] flex items-center gap-4">
              <svg viewBox="0 0 8 16" className="w-2 h-4 -mt-0.5 shrink-0" fill="#444">
                <path d="M0 0l8 8-8 8z" />
              </svg>
              {item}
            </button>
          </li>
        ))}
      </ul>
    </aside>
  );
}

/* ---------- lens data editor ---------- */

function EditorTabs() {
  return (
    <div className="h-[50px] shrink-0 flex items-end bg-[#cacdd2]">
      <svg viewBox="0 0 46 42" className="w-[46px] h-[42px] shrink-0">
        <path d="M0 42V41H8C28 41 22 1 46 1v41z" fill="#fff" />
        <path d="M0 41H8C28 41 22 1 46 1" fill="none" stroke="#8b8d99" strokeWidth="2" />
      </svg>
      <div className="h-[42px] w-[192px] pl-1 pb-0.5 flex items-center bg-white border-t-2 border-r-2 border-[#8b8d99] rounded-tr-sm">
        <svg viewBox="0 0 28 32" className="w-7 h-8 shrink-0">
          <path d="M1 1h20l6 6v24H1z" fill="#e2e2e2" stroke="#cfcfcf" strokeWidth="1" />
          <path d="M5 7h18M5 13h18M5 19h18M9 4v20M15 4v20M21 7v17" stroke="#fafafa" strokeWidth="1.5" />
          <path d="M2 27h24v4H2z" fill="#b5b5b5" />
          <ellipse cx="19" cy="24" rx="7" ry="4" fill="#eef6fb" stroke="#d0d6da" />
        </svg>
        <span className="ml-[11px] whitespace-nowrap">Lens Data</span>
        <button aria-label="Close" className="ml-auto mr-3.5 shrink-0">
          <svg viewBox="0 0 20 20" className="w-[18px] h-[18px]" stroke="#707070" strokeWidth="4">
            <path d="M2 2l16 16M18 2L2 18" />
          </svg>
        </button>
      </div>
      <div className="flex-1 h-[42px] border-b-2 border-[#8b8d99]" />
    </div>
  );
}

function EditorToolbar() {
  return (
    <div className="h-[60px] pt-1 shrink-0 flex items-center bg-white overflow-hidden *:shrink-0">
      <button className="w-[275px] pl-[22px] flex items-center gap-1.5 whitespace-nowrap">
        Update: All Windows <Caret className="w-2.5 h-1.5" />
      </button>
      <Divider />
      <div className="flex gap-3 ml-1.5">
        <OrbitIcon mark="1" />
        <OrbitIcon mark="A" />
        <MoveIcon />
        <GlobeIcon />
        <MapIcon />
      </div>
      <Divider className="ml-2.5" />
      <div className="flex gap-3 ml-1.5">
        <AxisIcon />
        <AxisIcon />
      </div>
      <Divider className="ml-2.5" />
      <div className="flex gap-3 ml-1.5">
        <ElementIcon />
        <TiltIcon />
        <ApertureIcon />
        <SurfaceIcon />
        <FalseColorIcon />
      </div>
      <Divider className="ml-2.5" />
      <div className="flex items-center ml-2.5 gap-1.5">
        <RingIcon />
        <Caret className="w-2.5 h-1.5" />
        <span className="ml-2"><BrushIcon /></span>
      </div>
      <Divider className="ml-2.5" />
      <div className="flex gap-3 ml-1.5">
        <ReverseIcon />
        <ToggleIcon />
      </div>
      <Divider className="ml-2.5" />
      <div className="flex gap-3 ml-1.5">
        <ListIcon />
        <SwapIcon />
        <CollapseIcon />
        <CollapseIcon />
      </div>
    </div>
  );
}

function LensTable() {
  const head = "h-[47px] pt-0.5 bg-linear-to-b from-[#d8dbdf] to-[#b9bdc3] font-bold";
  const line = "pt-1 border-r-2 border-b-2 border-[#c6c6c8]";
  const rowHead = "pt-1 bg-linear-to-r from-[#d8dbdf] to-[#b5b9c1] border-b-2 border-[#a3a6ad]";
  return (
    <div className="ml-2 mt-5 border-t-2 border-l-2 border-[#7390a8] rounded-tl-2xl overflow-hidden">
      <table className="w-full table-fixed border-separate border-spacing-0 text-[26px] leading-[41px] font-['Noto_Sans','Open_Sans',sans-serif]">
        <colgroup>
          <col className="w-[50px]" />
          <col className="w-[428px]" />
          <col className="w-96" />
          <col className="w-[118px]" />
          <col className="w-10" />
          <col className="w-[108px]" />
          <col />
        </colgroup>
        <thead>
          <tr>
            <th className={clsx(head, "border-r-2 border-b-2 border-[#a3a6ad] align-bottom")}>
              <svg viewBox="0 0 20 20" className="w-5 h-5 ml-auto mr-1 mb-1" fill="#88898c">
                <path d="M20 0v20H0z" />
              </svg>
            </th>
            <th className={head} />
            <th className={head} />
            <th className={clsx(head, "border-r-2 border-[#a3a6ad] text-left pl-[34px]")} colSpan={2}>
              Radius
            </th>
            <th className={clsx(head, "text-left pl-2.5 whitespace-nowrap")} colSpan={2}>
              Thickness
            </th>
          </tr>
        </thead>
        <tbody>
          {lensRows.map((row, i) => (
            <tr
              key={i}
              className={clsx(
                row.tone === "blue" && "bg-[#d0d0ff]",
                row.tone === "red" && "bg-[#ffcece]",
                !row.tone && "bg-white"
              )}
            >
              <th className={clsx(rowHead, "h-[47px] text-left pl-2")}>{i}</th>
              <td className={line}>
                <div className="flex justify-between px-1.5">
                  <span>{row.surf}</span>
                  {row.type && (
                    <button className="flex items-center gap-2 mr-1">
                      {row.type}
                      <Caret className="w-[15px] h-2.5" />
                    </button>
                  )}
                </div>
              </td>
              <td className={clsx(line, "text-right pr-1")}>{row.comment}</td>
              <td className={line}>
                <div className="flex justify-end pr-1">{row.radius}</div>
              </td>
              <td className={line} />
              <td className={clsx(line, "text-right pr-1")}>{row.thickness}</td>
              <td className="pt-1 border-b-2 border-[#c6c6c8] pl-2.5">{row.solve}</td>
            </tr>
          ))}
          <tr className="bg-white">
            <th className={clsx(rowHead, "h-[47px]")} />
            <td className={line} />
            <td className={line} />
            <td className={line} />
            <td className={line} />
            <td className={line} />
            <td className="border-b-2 border-[#c6c6c8]" />
          </tr>
        </tbody>
      </table>
    </div>
  );
}

function LensEditor() {
  return (
    <main className="flex-1 min-w-0 ml-1.5 flex flex-col bg-[#fdfdfd] border-l-2 border-[#a3adb8] overflow-hidden">
      <EditorTabs />
      <EditorToolbar />
      <div className="h-14 shrink-0 pl-1 pr-2 flex items-center font-bold bg-linear-to-b from-[#dadce1] to-[#babdc4] border-y-2 border-[#a5a8ad]">
        <button
          aria-label="Expand"
          className="w-12 h-12 rounded-full bg-white border-2 border-[#a5a5a8] flex items-center justify-center shrink-0"
        >
          <svg viewBox="0 0 16 12" className="w-4 h-3" fill="none" stroke="#5c5f66" strokeWidth="4">
            <path d="M1 2l7 7 7-7" />
          </svg>
        </button>
        <span className="ml-2 pt-0.5">Surface</span>
        <span className="ml-auto pt-0.5">Configuration</span>
      </div>
      <LensTable />
    </main>
  );
}

/* ---------- dialog ---------- */

function SurfaceSelect({ id, label, value }: { id: string; label: string; value: string }) {
  return (
    <div className="flex items-center text-[#77797c]">
      <label htmlFor={id} className="w-[246px] pl-2 pt-0.5">
        {label}
      </label>
      <div className="relative flex-1">
        <select
          id={id}
          disabled
          className="w-full h-[43px] pl-2.5 pt-0.5 appearance-none bg-[#efefef] border-2 border-[#d6d7d9] opacity-100"
        >
          <option>{value}</option>
        </select>
        <svg viewBox="0 0 12 10" className="absolute right-3 top-4 w-3 h-2.5" fill="none" stroke="#bcbec0" strokeWidth="2">
          <path d="M1 1l5 6 5-6" />
        </svg>
      </div>
    </div>
  );
}

function ConvertDialog() {
  const btn = "h-11 pt-0.5 bg-[#dddddd] border-2 border-[#707070]";
  return (
    <div
      role="dialog"
      aria-label="Convert To NSC Group"
      className="absolute left-[568px] top-[359px] w-[788px] pl-[30px] pr-[30px] pb-[29px] bg-linear-to-b from-white from-10% to-[#d9dce1] border-2 border-[#707276] shadow-[2px_6px_18px_rgba(0,0,0,0.45)]"
    >
      <h2 className="h-14 -ml-[17px] flex items-center">Convert To NSC Group</h2>

      <fieldset className="mt-[34px] mx-0.5 px-2 pt-3.5 pb-[15px] border-2 border-[#d5dfe5] rounded-lg shadow-[inset_0_0_0_2px_#fff]">
        <legend className="px-1.5 leading-8">Production Tools</legend>
        <button className={clsx(btn, "w-full")}>Design Lockdown</button>
        <button className={clsx(btn, "w-full mt-4")}>Critical Rayset Generator</button>
        <p className="mt-4 ml-2 mr-10 text-[19px] leading-[27px]">
          We recommend running the Design Lockdown tool before converting the file to non-sequential mode. The critical
          rayset can be used to validate that the translation was successful.
        </p>
      </fieldset>

      <div className="mt-[38px] ml-0.5 flex flex-col gap-2">
        <SurfaceSelect id="first" label="First Surface" value="1" />
        <SurfaceSelect id="last" label="Last Surface" value="21 detector" />
      </div>

      <div className="mt-2.5 ml-0.5">
        {options.map((text) => (
          <label key={text} className="h-10 flex items-center gap-2.5 whitespace-nowrap">
            <span className="relative w-7 h-7 shrink-0">
              <input
                type="checkbox"
                defaultChecked
                className="peer block w-7 h-7 appearance-none bg-white border-2 border-[#707070]"
              />
              <svg
                viewBox="0 0 28 28"
                className="absolute inset-0 w-7 h-7 hidden peer-checked:block pointer-events-none"
                fill="#222"
              >
                <path d="M5 14l3-2 5 6L21 5l3 1-9 17h-4z" />
              </svg>
            </span>
            {text}
          </label>
        ))}
      </div>

      <div className="mt-4 ml-10 flex gap-2.5">
        <input
          aria-label="New system file"
          defaultValue="Spectrometer-NONSEQ.zmx"
          className="w-[400px] h-10 px-1 pb-0.5 bg-white border-2 border-[#abadb3]"
        />
        <button className="w-[200px] h-10 bg-[#dddddd] border-2 border-[#707070]">Browse</button>
      </div>

      <hr className="mt-9 border-0 h-0.5 bg-[#8fb0c4]" />
      <p className="mt-[27px] ml-2.5 leading-8">Status:</p>

      <div className="relative mt-[25px] ml-1.5 flex items-center gap-1.5">
        <button className={clsx(btn, "w-60")}>OK</button>
        <button className={clsx(btn, "w-60")}>Cancel</button>
        <button aria-label="Help" className="ml-0.5">
          <HelpIcon className="w-8 h-8" />
        </button>
        {/* pointer to the OK button */}
        <svg viewBox="0 0 152 100" className="absolute left-[160px] bottom-[15px] w-[152px] h-[100px] pointer-events-none">
          <path d="M146 6L26 79" stroke="#ff4444" strokeWidth="10" strokeLinecap="round" />
          <path d="M0 99L16 71 21 79 30 87 33 95z" fill="#ff4444" />
        </svg>
      </div>
    </div>
  );
}

export default function App() {
  return (
    <div className="relative h-screen overflow-hidden flex flex-col bg-[#ebebeb] text-[23px] text-black font-['Open_Sans','Noto_Sans',sans-serif]">
      <IconDefs />
      <header className="shrink-0 bg-[#fbfbfb]">
        <QuickAccess />
        <MenuTabs />
        <Ribbon />
      </header>
      <div className="flex-1 min-h-0 flex">
        <SystemExplorer />
        <LensEditor />
      </div>
      <ConvertDialog />
    </div>
  );
}
